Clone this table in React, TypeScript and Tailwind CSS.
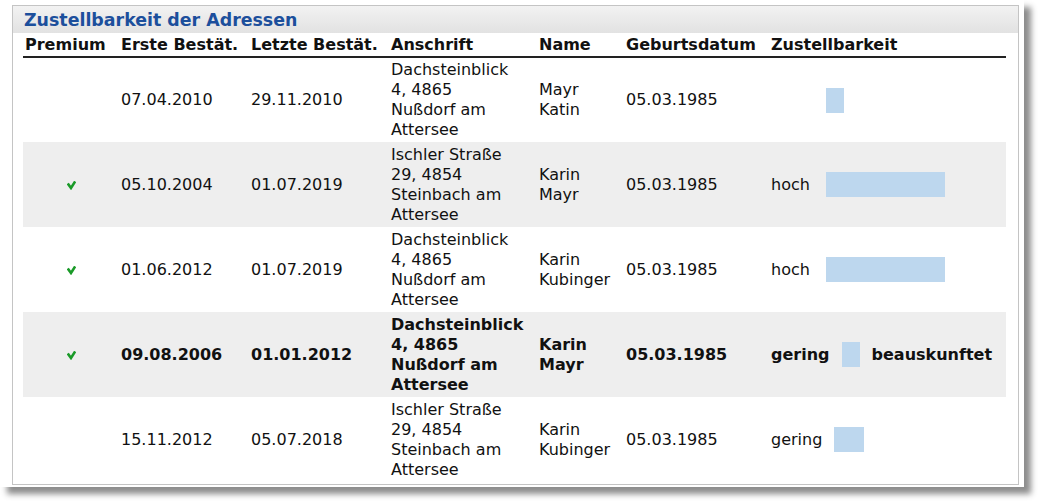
import React from "react";

type Row = {
  premium: boolean;
  first: string;
  last: string;
  address: string[];
  name: string[];
  birth: string;
  level: string;
  bar: number;
  note?: string;
  bold?: boolean;
};

const rows: Row[] = [
  {
    premium: false,
    first: "07.04.2010",
    last: "29.11.2010",
    address: ["Dachsteinblick", "4, 4865", "Nußdorf am", "Attersee"],
    name: ["Mayr", "Katin"],
    birth: "05.03.1985",
    level: "",
    bar: 18,
  },
  {
    premium: true,
    first: "05.10.2004",
    last: "01.07.2019",
    address: ["Ischler Straße", "29, 4854", "Steinbach am", "Attersee"],
    name: ["Karin", "Mayr"],
    birth: "05.03.1985",
    level: "hoch",
    bar: 119,
  },
  {
    premium: true,
    first: "01.06.2012",
    last: "01.07.2019",
    address: ["Dachsteinblick", "4, 4865", "Nußdorf am", "Attersee"],
    name: ["Karin", "Kubinger"],
    birth: "05.03.1985",
    level: "hoch",
    bar: 119,
  },
  {
    premium: true,
    first: "09.08.2006",
    last: "01.01.2012",
    address: ["Dachsteinblick", "4, 4865", "Nußdorf am", "Attersee"],
    name: ["Karin", "Mayr"],
    birth: "05.03.1985",
    level: "gering",
    bar: 18,
    note: "beauskunftet",
    bold: true,
  },
  {
    premium: false,
    first: "15.11.2012",
    last: "05.07.2018",
    address: ["Ischler Straße", "29, 4854", "Steinbach am", "Attersee"],
    name: ["Karin", "Kubinger"],
    birth: "05.03.1985",
    level: "gering",
    bar: 30,
  },
];

function Check() {
  return (
    <svg width="9" height="9" viewBox="0 0 9 9" className="inline-block">
      <path d="M1.5 3.5 L4 7 L7.5 1.5" fill="none" stroke="#1a9a28" strokeWidth="2.6" strokeLinecap="square" />
    </svg>
  );
}

export default function App() {
  return (
    <div className="w-[1040px] h-[501px] bg-white" style={{ fontFamily: "'DejaVu Sans', Verdana, sans-serif" }}>
      <div className="w-[1024px] h-[487px] bg-white shadow-[7px_7px_6px_rgba(0,0,0,0.45)] pt-[5px] pl-[12px]">
        <div className="w-[1007px] h-[480px] border border-[#c4c4c4] bg-white">
          {/* Panel header */}
          <div className="h-[27px] bg-gradient-to-b from-[#f2f2f2] to-[#e2e2e2] flex items-center pl-[11px] pt-[1px]">
            <h2 className="text-[17.4px] font-bold text-[#1c4f9c] leading-[20px]">Zustellbarkeit der Adressen</h2>
          </div>

          <table className="ml-[10px] w-[983px] table-fixed border-collapse text-[16px] leading-[20px] text-[#111]">
            <colgroup>
              <col className="w-[96px]" />
              <col className="w-[130px]" />
              <col className="w-[140px]" />
              <col className="w-[148px]" />
              <col className="w-[87px]" />
              <col className="w-[145px]" />
              <col />
            </colgroup>
            <thead>
              <tr className="h-[24px] border-b-2 border-[#222] font-bold text-left">
                <th className="px-[2px] align-middle">Premium</th>
                <th className="px-[2px] align-middle">Erste Bestät.</th>
                <th className="px-[2px] align-middle">Letzte Bestät.</th>
                <th className="px-[2px] align-middle">Anschrift</th>
                <th className="px-[2px] align-middle">Name</th>
                <th className="px-[2px] align-middle">Geburtsdatum</th>
                <th className="px-[2px] align-middle">Zustellbarkeit</th>
              </tr>
            </thead>
            <tbody>
              {rows.map((r, i) => (
                <tr
                  key={i}
                  className={`h-[85px] ${i % 2 === 1 ? "bg-[#eeeeee]" : "bg-white"} ${r.bold ? "font-bold" : ""}`}
                >
                  <td className="px-[2px] text-center align-middle">{r.premium && <Check />}</td>
                  <td className="px-[2px] align-middle">{r.first}</td>
                  <td className="px-[2px] align-middle">{r.last}</td>
                  <td className="px-[2px] align-middle">
                    {r.address.map((l) => (
                      <div key={l}>{l}</div>
                    ))}
                  </td>
                  <td className="px-[2px] align-middle">
                    {r.name.map((l) => (
                      <div key={l}>{l}</div>
                    ))}
                  </td>
                  <td className="px-[2px] align-middle">{r.birth}</td>
                  <td className="px-[2px] align-middle">
                    <div className="flex items-center">
                      <span className="min-w-[43px] mr-[12px]">{r.level}</span>
                      <span className="h-[25px] bg-[#bdd7ee]" style={{ width: r.bar }} />
                      {r.note && <span className="ml-[12px]">{r.note}</span>}
                    </div>
                  </td>
                </tr>
              ))}
            </tbody>
          </table>
        </div>
      </div>
    </div>
  );
}
